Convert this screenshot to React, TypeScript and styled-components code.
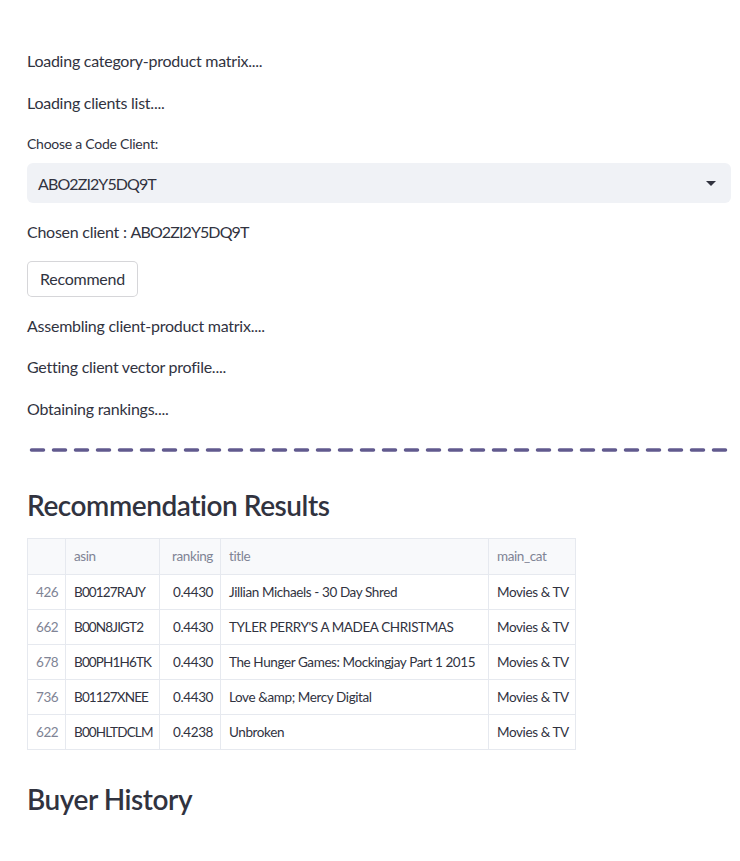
import React from "react";
import styled, { createGlobalStyle } from "styled-components";

const Global = createGlobalStyle`
  html, body { margin: 0; padding: 0; background: #ffffff; }
  body {
    font-family: "Source Sans Pro", Lato, "Liberation Sans", sans-serif;
    color: #31333f;
    letter-spacing: -0.25px;
    -webkit-font-smoothing: antialiased;
  }
`;

const Main = styled.main`
  width: 704px;
  padding: 48px 0 40px 27px;
  display: flex;
  flex-direction: column;
  gap: 16px;
`;

const Text = styled.p`
  margin: 0;
  font-size: 16px;
  line-height: 25.6px;
`;

const Field = styled.div`
  display: flex;
  flex-direction: column;
  gap: 8px;
`;

const Label = styled.label`
  padding-top: 2px;
  font-size: 14px;
  line-height: 22px;
`;

const Select = styled.div`
  height: 40px;
  border-radius: 6px;
  background: #f0f2f6;
  display: flex;
  align-items: center;
  justify-content: space-between;
  padding: 0 15px 0 11px;
  font-size: 16px;
`;

const Code = styled.span`
  letter-spacing: -0.9px;
`;

const Caret = styled.span`
  width: 0;
  height: 0;
  border-left: 5px solid transparent;
  border-right: 5px solid transparent;
  border-top: 5px solid #31333f;
`;

const Button = styled.button`
  align-self: flex-start;
  height: 36px;
  padding: 0 12px;
  font-family: inherit;
  font-size: 16px;
  letter-spacing: -0.25px;
  color: #31333f;
  background: #ffffff;
  border: 1px solid rgba(49, 51, 63, 0.2);
  border-radius: 5px;
`;

const Divider = styled.svg`
  display: block;
  width: 704px;
  height: 18px;
`;

const Heading = styled.h2`
  margin: 0;
  padding-top: 16px;
  font-size: 28px;
  line-height: 34px;
  font-weight: 600;
  letter-spacing: -0.45px;
  color: #31333f;
`;

const Table = styled.table`
  border-collapse: collapse;
  font-size: 13.5px;
  letter-spacing: -0.4px;
  table-layout: fixed;
  width: 548px;
`;

const Th = styled.th<{ $w: number; $right?: boolean }>`
  box-sizing: border-box;
  width: ${(p) => p.$w}px;
  height: 36px;
  padding: 0 7px 0 8px;
  font-weight: 400;
  color: #808495;
  background: #f8f9fb;
  text-align: ${(p) => (p.$right ? "right" : "left")};
  border: 1px solid #e6e9ef;
  white-space: nowrap;
`;

const Td = styled.td<{ $right?: boolean; $muted?: boolean; $tight?: boolean }>`
  box-sizing: border-box;
  height: 35px;
  padding: 0 7px 0 8px;
  text-align: ${(p) => (p.$right ? "right" : "left")};
  color: ${(p) => (p.$muted ? "#808495" : "#31333f")};
  letter-spacing: ${(p) => (p.$tight ? "-0.85px" : "-0.4px")};
  border: 1px solid #e6e9ef;
  white-space: nowrap;
  overflow: hidden;
`;

const rows = [
  ["426", "B00127RAJY", "0.4430", "Jillian Michaels - 30 Day Shred", "Movies & TV"],
  ["662", "B00N8JIGT2", "0.4430", "TYLER PERRY'S A MADEA CHRISTMAS", "Movies & TV"],
  ["678", "B00PH1H6TK", "0.4430", "The Hunger Games: Mockingjay Part 1 2015", "Movies & TV"],
  ["736", "B01127XNEE", "0.4430", "Love &amp; Mercy Digital", "Movies & TV"],
  ["622", "B00HLTDCLM", "0.4238", "Unbroken", "Movies & TV"],
];

export default function App() {
  return (
    <>
      <Global />
      <Main>
        <Text>Loading category-product matrix....</Text>
        <Text>Loading clients list....</Text>
        <Field>
          <Label>Choose a Code Client:</Label>
          <Select>
            <Code>ABO2ZI2Y5DQ9T</Code>
            <Caret />
          </Select>
        </Field>
        <Text>
          Chosen client : <Code>ABO2ZI2Y5DQ9T</Code>
        </Text>
        <Button>Recommend</Button>
        <Text>Assembling client-product matrix....</Text>
        <Text>Getting client vector profile....</Text>
        <Text>Obtaining rankings....</Text>
        <Divider viewBox="0 0 704 18">
          <line
            x1="4.5"
            y1="12"
            x2="702"
            y2="12"
            stroke="#615a8e"
            strokeWidth="3.5"
            strokeLinecap="round"
            strokeDasharray="12 10"
          />
        </Divider>
        <Heading>Recommendation Results</Heading>
        <Table>
          <thead>
            <tr>
              <Th $w={38}></Th>
              <Th $w={94}>asin</Th>
              <Th $w={61} $right>ranking</Th>
              <Th $w={268}>title</Th>
              <Th $w={87}>main_cat</Th>
            </tr>
          </thead>
          <tbody>
            {rows.map((r) => (
              <tr key={r[0]}>
                <Td $muted>{r[0]}</Td>
                <Td $tight>{r[1]}</Td>
                <Td $right>{r[2]}</Td>
                <Td>{r[3]}</Td>
                <Td>{r[4]}</Td>
              </tr>
            ))}
          </tbody>
        </Table>
        <Heading>Buyer History</Heading>
      </Main>
    </>
  );
}
